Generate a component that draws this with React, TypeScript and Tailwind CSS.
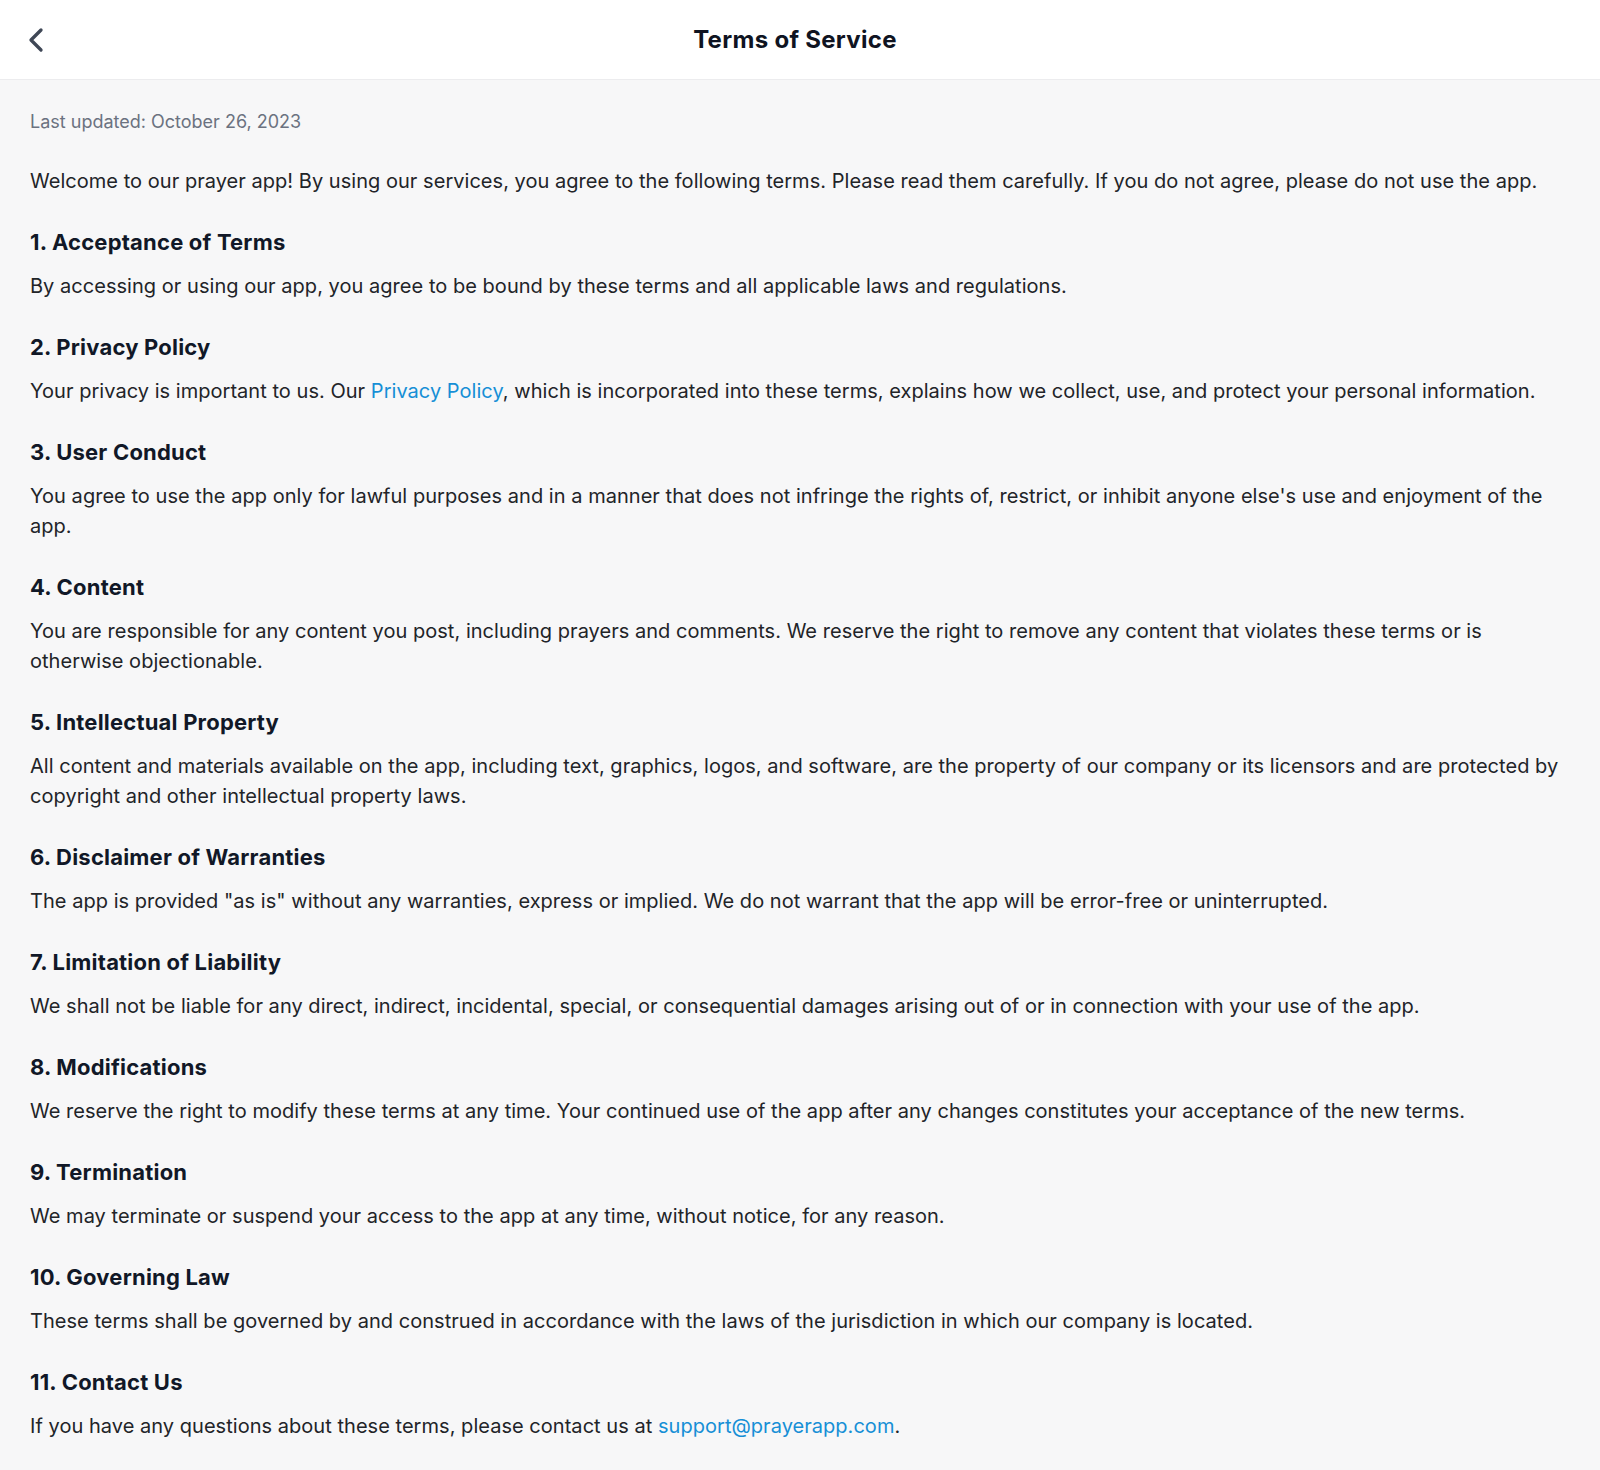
import { ChevronLeft } from 'lucide-react'

const sections = [
  {
    title: '1. Acceptance of Terms',
    body: 'By accessing or using our app, you agree to be bound by these terms and all applicable laws and regulations.',
  },
  {
    title: '2. Privacy Policy',
    body: (
      <>
        Your privacy is important to us. Our{' '}
        <a href="#" className="text-[#168fd6]">
          Privacy Policy
        </a>
        , which is incorporated into these terms, explains how we collect, use, and protect your personal information.
      </>
    ),
  },
  {
    title: '3. User Conduct',
    body: "You agree to use the app only for lawful purposes and in a manner that does not infringe the rights of, restrict, or inhibit anyone else's use and enjoyment of the app.",
  },
  {
    title: '4. Content',
    body: 'You are responsible for any content you post, including prayers and comments. We reserve the right to remove any content that violates these terms or is otherwise objectionable.',
  },
  {
    title: '5. Intellectual Property',
    body: 'All content and materials available on the app, including text, graphics, logos, and software, are the property of our company or its licensors and are protected by copyright and other intellectual property laws.',
  },
  {
    title: '6. Disclaimer of Warranties',
    body: 'The app is provided "as is" without any warranties, express or implied. We do not warrant that the app will be error-free or uninterrupted.',
  },
  {
    title: '7. Limitation of Liability',
    body: 'We shall not be liable for any direct, indirect, incidental, special, or consequential damages arising out of or in connection with your use of the app.',
  },
  {
    title: '8. Modifications',
    body: 'We reserve the right to modify these terms at any time. Your continued use of the app after any changes constitutes your acceptance of the new terms.',
  },
  {
    title: '9. Termination',
    body: 'We may terminate or suspend your access to the app at any time, without notice, for any reason.',
  },
  {
    title: '10. Governing Law',
    body: 'These terms shall be governed by and construed in accordance with the laws of the jurisdiction in which our company is located.',
  },
  {
    title: '11. Contact Us',
    body: (
      <>
        If you have any questions about these terms, please contact us at{' '}
        <a href="#" className="text-[#168fd6]">
          support@prayerapp.com
        </a>
        .
      </>
    ),
  },
]

export default function App() {
  return (
    <div className="min-h-screen bg-[#f7f7f8] font-['Inter',sans-serif]">
      {/* Header */}
      <header className="relative flex h-20 items-center justify-center border-b border-[#ececee] bg-white pr-[10px]">
        <button className="absolute left-4 text-[#3f4756]">
          <ChevronLeft className="h-10 w-10" strokeWidth={2} />
        </button>
        <h1 className="text-2xl font-bold tracking-[0.3px] text-[#0f1422]">Terms of Service</h1>
      </header>

      {/* Content */}
      <main className="flex flex-col gap-8 px-[30px] pt-[30px] pb-10">
        <p className="text-lg leading-6 text-[#6b7280]">Last updated: October 26, 2023</p>
        <p className="text-xl leading-[30px] tracking-[0.035px] text-[#222428]">
          Welcome to our prayer app! By using our services, you agree to the following terms. Please read them carefully. If you do not agree, please do not use the app.
        </p>
        {sections.map((s) => (
          <section key={s.title} className="flex flex-col gap-[15px]">
            <h2 className="text-[22px] leading-7 font-bold tracking-[0.2px] text-[#111827]">{s.title}</h2>
            <p className="text-xl leading-[30px] tracking-[0.035px] text-[#222428]">{s.body}</p>
          </section>
        ))}
      </main>
    </div>
  )
}
